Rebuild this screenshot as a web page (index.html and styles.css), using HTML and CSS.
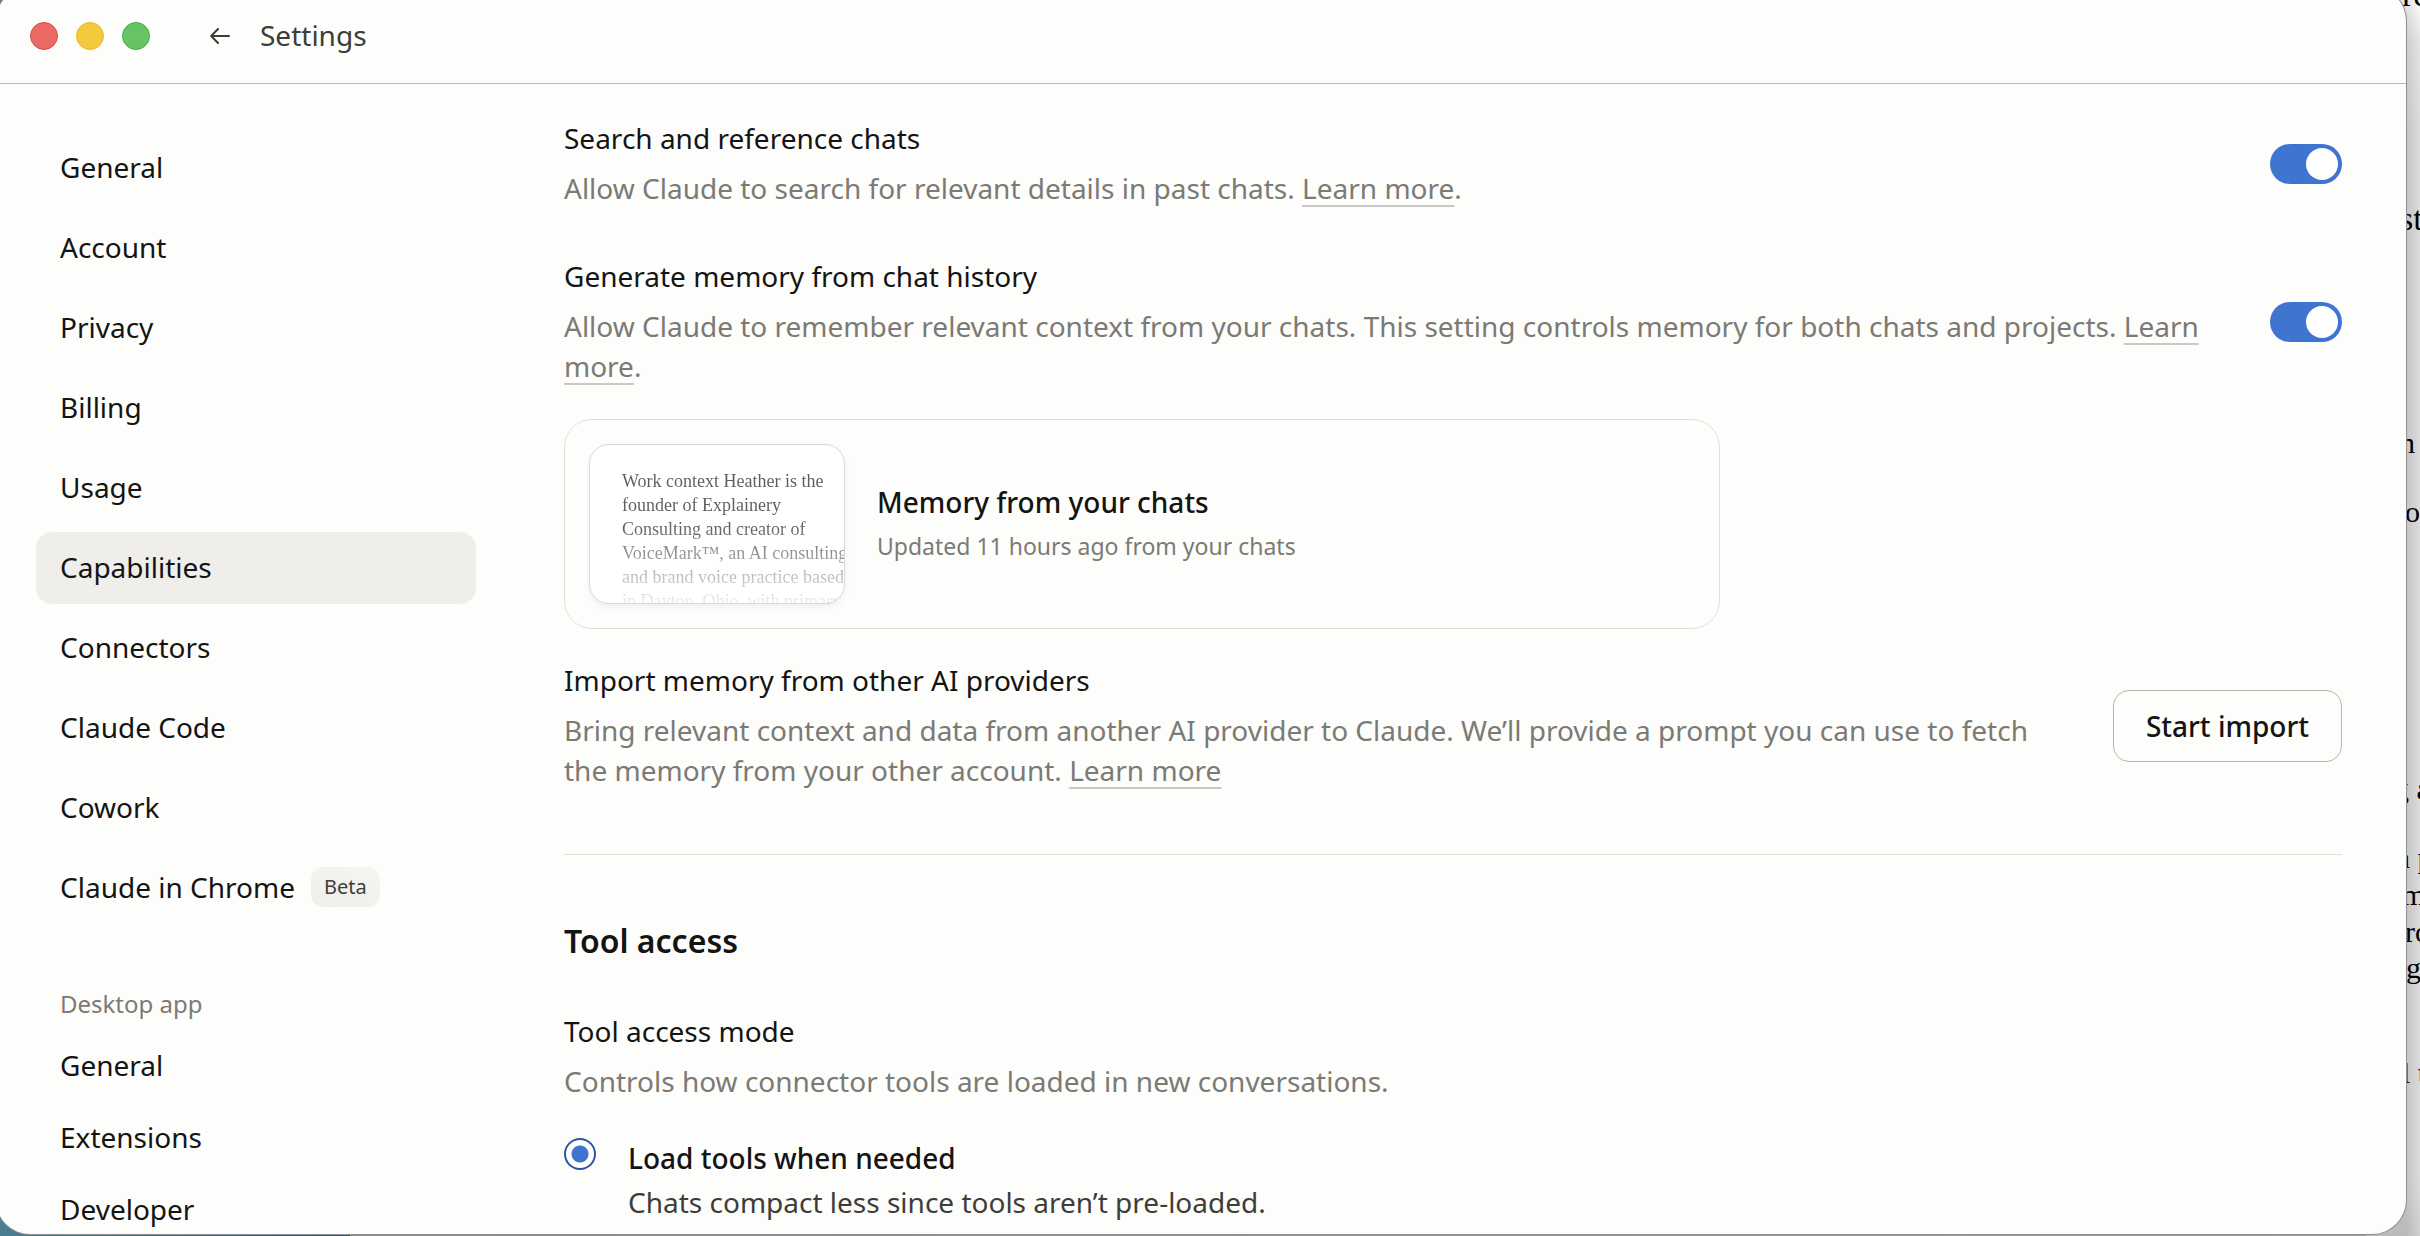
FILE: index.html
```
<!DOCTYPE html>
<html lang="en">
<head>
<meta charset="utf-8">
<title>Settings</title>
<link rel="stylesheet" href="styles.css">
</head>
<body>
<div class="desktop">
  <div class="document" aria-hidden="true">
    <span class="fragment heading-a">vre</span>
    <span class="fragment heading-b">st</span>
    <span class="fragment line-a">n</span>
    <span class="fragment line-b">or</span>
    <span class="fragment line-c">g a</span>
    <span class="fragment line-d">n p</span>
    <span class="fragment line-e">m</span>
    <span class="fragment line-f">ro</span>
    <span class="fragment line-g">g</span>
    <span class="fragment line-h">l t</span>
  </div>
  <div class="window">
    <header class="titlebar">
      <div class="lights">
        <button class="light close" aria-label="Close"></button>
        <button class="light minimize" aria-label="Minimize"></button>
        <button class="light zoom" aria-label="Zoom"></button>
      </div>
      <button class="back" aria-label="Back">
        <svg width="20" height="16" viewBox="0 0 20 16" fill="none" stroke="#3d3d3a" stroke-width="2" stroke-linecap="round" stroke-linejoin="round"><path d="M19 8H1.2M8 1 1.2 8 8 15"/></svg>
      </button>
      <h1 class="title">Settings</h1>
    </header>
    <div class="body">
      <nav class="sidebar" aria-label="Settings sections">
        <ul class="group">
          <li><a class="item" href="#general">General</a></li>
          <li><a class="item" href="#account">Account</a></li>
          <li><a class="item" href="#privacy">Privacy</a></li>
          <li><a class="item" href="#billing">Billing</a></li>
          <li><a class="item" href="#usage">Usage</a></li>
          <li><a class="item active" href="#capabilities" aria-current="page">Capabilities</a></li>
          <li><a class="item" href="#connectors">Connectors</a></li>
          <li><a class="item" href="#code">Claude Code</a></li>
          <li><a class="item" href="#cowork">Cowork</a></li>
          <li><a class="item" href="#chrome">Claude in Chrome <span class="badge">Beta</span></a></li>
        </ul>
        <h2 class="group-title">Desktop app</h2>
        <ul class="group compact">
          <li><a class="item" href="#desktop-general">General</a></li>
          <li><a class="item" href="#extensions">Extensions</a></li>
          <li><a class="item" href="#developer">Developer</a></li>
        </ul>
      </nav>
      <main class="content">
        <section class="memory">
          <div class="row">
            <div class="copy">
              <label class="name" for="search-chats">Search and reference chats</label>
              <p class="desc">Allow Claude to search for relevant details in past chats. <a class="more" href="#learn-search">Learn more</a>.</p>
            </div>
            <input class="toggle" type="checkbox" role="switch" id="search-chats" checked>
          </div>
          <div class="row">
            <div class="copy">
              <label class="name" for="generate-memory">Generate memory from chat history</label>
              <p class="desc">Allow Claude to remember relevant context from your chats. This setting controls memory for both chats and projects. <a class="more" href="#learn-memory">Learn more</a>.</p>
            </div>
            <input class="toggle" type="checkbox" role="switch" id="generate-memory" checked>
          </div>
          <a class="card" href="#memory">
            <span class="preview">Work context Heather is the<br>founder of Explainery<br>Consulting and creator of<br>VoiceMark™, an AI consulting<br>and brand voice practice based<br>in Dayton, Ohio, with primary</span>
            <span class="card-copy">
              <span class="card-title">Memory from your chats</span>
              <span class="card-note">Updated 11 hours ago from your chats</span>
            </span>
          </a>
          <div class="row import">
            <div class="copy">
              <h3 class="name">Import memory from other AI providers</h3>
              <p class="desc">Bring relevant context and data from another AI provider to Claude. We’ll provide a prompt you can use to fetch the memory from your other account. <a class="more" href="#learn-import">Learn more</a></p>
            </div>
            <button class="action">Start import</button>
          </div>
        </section>
        <section class="tools">
          <h2 class="section-title">Tool access</h2>
          <h3 class="name">Tool access mode</h3>
          <p class="desc">Controls how connector tools are loaded in new conversations.</p>
          <label class="option">
            <input class="radio" type="radio" name="tool-mode" checked>
            <span class="option-copy">
              <span class="option-title">Load tools when needed</span>
              <span class="option-note">Chats compact less since tools aren’t pre-loaded.</span>
            </span>
          </label>
        </section>
      </main>
    </div>
  </div>
</div>
</body>
</html>
```
FILE: styles.css
```
* { box-sizing: border-box; margin: 0; padding: 0; }

body {
  font-family: "Noto Sans", sans-serif;
  font-size: 28px;
  line-height: 40px;
  color: #141413;
}

ul { list-style: none; }
a { color: inherit; text-decoration: none; }
h1, h2, h3 { font-size: inherit; font-weight: 400; }
button { font: inherit; color: inherit; background: none; border: 0; }

/* Desktop and the document that lies behind the window */
.desktop {
  position: relative;
  display: flex;
  height: 100vh;
  overflow: hidden;
  background: linear-gradient(90deg, #4a7f93 0, #2f5a6a 350px, #8c8a89 350px, #a09e9d 100%);
}

.document {
  position: absolute;
  inset: 0 0 0 auto;
  width: 54px;
  overflow: hidden;
  background: linear-gradient(90deg, rgba(0, 0, 0, .1) 40px, rgba(0, 0, 0, 0)), linear-gradient(#fdfdfd 0, #e4e4e4 40px, #dbdbdb 130px, #dbdbdb 1180px, #cfcfcf 100%);
}

.fragment {
  position: absolute;
  left: 36px;
  font: 30px/36px "Liberation Serif", serif;
  color: #000;
  white-space: nowrap;
}

.heading-a { top: -23px; left: 19px; font-size: 34px; }
.heading-b { top: 201px; left: 34px; font-size: 34px; }
.line-a { top: 425px; left: 34px; }
.line-b { top: 494px; left: 39px; }
.line-c { top: 771px; left: 28px; }
.line-d { top: 840px; left: 29px; }
.line-e { top: 877px; }
.line-f { top: 914px; left: 39px; }
.line-g { top: 950px; left: 40px; }
.line-h { top: 1055px; }

/* Settings window, its top and left edges just past the screen */
.window {
  position: relative;
  flex: 1;
  display: flex;
  flex-direction: column;
  margin: -13px 14px 2px -4px;
  padding: 13px 0 0 4px;
  overflow: hidden;
  background: #fdfdfb;
  border-radius: 34px;
  box-shadow: 0 0 0 1px #8f8f8f;
}

.titlebar {
  flex: none;
  display: flex;
  align-items: center;
  height: 84px;
  padding: 0 30px 12px;
  border-bottom: 1px solid #b9b9b6;
  color: #3d3d3a;
}

.title { padding-bottom: 2px; }
.lights { display: flex; gap: 18px; }
.light { width: 28px; height: 28px; border: 1px solid; border-radius: 50%; }
.close { background: #ec6a66; border-color: #e24b48; }
.minimize { background: #f3c93d; border-color: #edba1d; }
.zoom { background: #67c466; border-color: #44b13f; }
.back { display: flex; margin: 0 30px 0 60px; }

.body { flex: 1; min-height: 0; display: flex; overflow: hidden; }

/* Sidebar */
.sidebar { flex: none; width: 476px; padding: 48px 0 0 36px; }
.group { display: flex; flex-direction: column; gap: 8px; }
.compact { gap: 0; }

.item {
  display: flex;
  align-items: center;
  height: 72px;
  padding: 0 24px 2px;
  border-radius: 16px;
}

.active { background: #efeeeb; }

.badge {
  margin-left: 16px;
  padding: 0 13px;
  border-radius: 12px;
  background: linear-gradient(200deg, #f5f5f2, #eeeeeb);
  font-size: 20px;
  color: #3d3d3a;
}

.group-title {
  padding: 60px 24px 6px;
  font-size: 24px;
  color: #7b7a74;
}

/* Content */
.content { flex: 1; min-width: 0; padding: 34px 64px 0 88px; }

.memory { display: flex; flex-direction: column; padding-bottom: 62px; border-bottom: 1px solid #dededb; }
.row { display: flex; align-items: center; justify-content: space-between; gap: 48px; }
.row + .row { margin-top: 46px; }
.name { display: block; }
.desc { padding: 10px 0 2px; color: #7b7a74; }

.more {
  text-decoration: underline 2px #c9c9c6;
  text-decoration-skip-ink: none;
  text-underline-offset: 6px;
}

.toggle {
  flex: none;
  appearance: none;
  display: flex;
  justify-content: flex-end;
  width: 72px;
  height: 40px;
  padding: 4px;
  border-radius: 20px;
  background: #3f74d1;
}

.toggle::before { content: ""; width: 32px; height: 32px; border-radius: 50%; background: #fff; }

.card {
  display: flex;
  align-items: center;
  gap: 32px;
  width: 65%;
  margin: 31px 0;
  padding: 24px;
  border: 1px solid #dededb;
  border-radius: 28px;
}

.preview {
  flex: none;
  width: 256px;
  height: 160px;
  padding: 24px 32px;
  overflow: hidden;
  border: 1px solid #d9d9d9;
  border-radius: 20px;
  background: linear-gradient(#5e5d59 50%, #fff 106%) text, #fff;
  box-shadow: 0 3px 6px rgba(0, 0, 0, .06);
  font: 18px/24px "Liberation Serif", serif;
  white-space: nowrap;
  color: transparent;
}

.card-copy { display: flex; flex-direction: column; gap: 4px; }
.card-title { font-weight: 500; }
.card-note { font-size: 23px; color: #7b7a74; }

.action {
  flex: none;
  height: 72px;
  padding: 0 32px;
  border: 1px solid #b5b5b1;
  border-radius: 16px;
  font-weight: 500;
}

.section-title { padding: 66px 0 50px; font-size: 32px; font-weight: 600; }

.option { display: flex; gap: 32px; margin-top: 35px; }

.radio {
  flex: none;
  appearance: none;
  width: 32px;
  height: 32px;
  border: 2px solid #2c56a3;
  border-radius: 50%;
  background: radial-gradient(circle, #3f74d1 8px, #fff 9px);
}

.option-copy { display: flex; flex-direction: column; gap: 4px; }
.option-title { font-weight: 500; }
.option-note { color: #3d3d3a; }
```
